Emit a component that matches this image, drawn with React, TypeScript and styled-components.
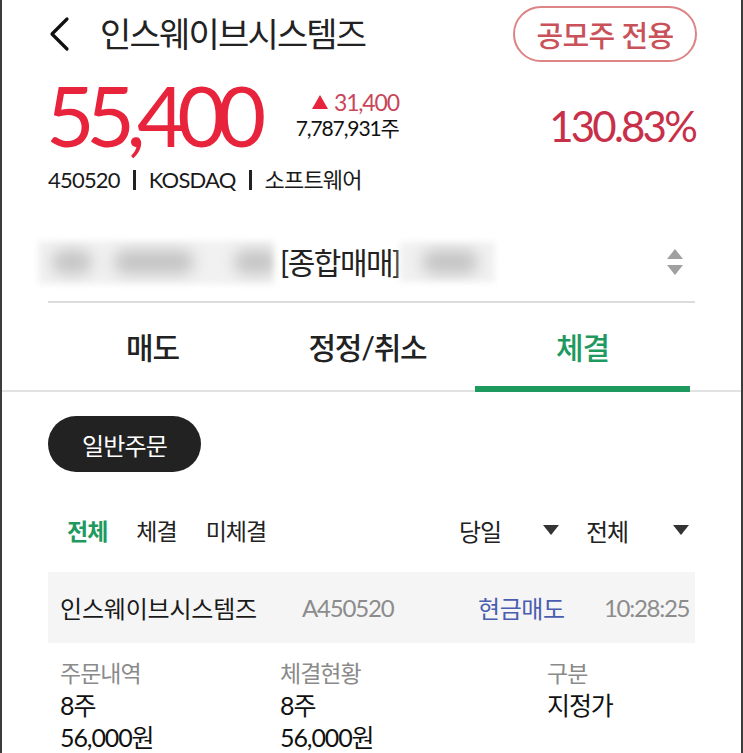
import React from "react";
import styled, { createGlobalStyle } from "styled-components";

const Global = createGlobalStyle`
  html, body { margin: 0; padding: 0; background: #fff; }
  body { font-family: Lato, "Noto Sans CJK KR", sans-serif; color: #1a1a1a; }
  * { box-sizing: border-box; }
`;

const FONT = `Lato, "Noto Sans CJK KR", sans-serif`;

const Page = styled.div`
  width: 743px;
  min-height: 753px;
  border-left: 2px solid #3c3c3c;
  border-right: 2px solid #3c3c3c;
  font-family: ${FONT};
  overflow: hidden;
`;

const Header = styled.div`
  display: flex;
  align-items: center;
  height: 62px;
  padding: 6px 44px 0 44px;
`;

const Back = styled.div`
  width: 24px;
  height: 36px;
  display: flex;
  align-items: center;
  margin-left: 2px;
`;

const Title = styled.h1`
  margin: 0 0 0 28px;
  font-size: 34px;
  font-weight: 400;
  letter-spacing: -1.8px;
  color: #222;
  line-height: 1;
`;

const Badge = styled.div`
  margin-left: auto;
  width: 184px;
  height: 56px;
  border: 2px solid #dc8486;
  border-radius: 28px;
  display: flex;
  align-items: center;
  justify-content: center;
  color: #c9525a;
  font-size: 29px;
  font-weight: 500;
  letter-spacing: -0.6px;
`;

const PriceRow = styled.div`
  display: flex;
  align-items: flex-start;
  height: 82px;
  margin-top: 11px;
  padding: 0 46px 0 44px;
`;

const Price = styled.div`
  font-size: 84px;
  line-height: 84px;
  color: #e8233c;
  letter-spacing: -8.5px;
  font-weight: 400;
`;

const ChangeBox = styled.div`
  margin: 16px 0 0 38px;
  display: flex;
  flex-direction: column;
  align-items: flex-end;
`;

const Change = styled.div`
  display: flex;
  align-items: center;
  font-size: 23px;
  line-height: 26px;
  color: #c8475c;
  letter-spacing: -1.2px;
`;

const Tri = styled.span`
  display: inline-block;
  width: 0;
  height: 0;
  border-left: 8px solid transparent;
  border-right: 8px solid transparent;
  border-bottom: 14px solid #e8233c;
  margin-right: 6px;
`;

const Volume = styled.div`
  font-size: 21px;
  line-height: 26px;
  color: #111;
  letter-spacing: -1.1px;
`;

const Rate = styled.div`
  margin: 32px 0 0 auto;
  font-size: 42px;
  line-height: 42px;
  color: #c8304a;
  letter-spacing: -2.8px;
`;

const Meta = styled.div`
  margin-top: 12px;
  padding: 0 46px;
  font-size: 22px;
  line-height: 26px;
  color: #1a1a1a;
  letter-spacing: -0.8px;
  display: flex;
  align-items: center;
`;

const Sep = styled.span`
  display: inline-block;
  width: 3px;
  height: 20px;
  background: #222;
  margin: 0 13px;
`;

const AccountRow = styled.div`
  margin: 30px 46px 0 46px;
  height: 80px;
  border-bottom: 2px solid #dcdcdc;
  display: flex;
  align-items: center;
`;

const Blur = styled.div<{ $w: number; $h: number }>`
  width: ${(p) => p.$w}px;
  height: ${(p) => p.$h}px;
  background: #f1f1f1;
  overflow: hidden;
  filter: blur(3px);
  display: flex;
  align-items: center;
  flex-shrink: 0;
`;

const Blob = styled.span<{ $w: number; $ml: number }>`
  display: block;
  width: ${(p) => p.$w}px;
  height: 24px;
  margin-left: ${(p) => p.$ml}px;
  background: #c4c4c4;
  border-radius: 12px;
  filter: blur(7px);
  flex-shrink: 0;
`;

const AcctText = styled.span`
  font-size: 30px;
  letter-spacing: -1.5px;
  color: #222;
  margin: 0 0 0 6px;
  line-height: 1;
`;

const Stepper = styled.div`
  margin-left: auto;
  margin-right: 12px;
  display: flex;
  flex-direction: column;
  gap: 6px;
`;

const Tabs = styled.div`
  display: grid;
  grid-template-columns: repeat(3, 215px);
  padding-left: 43px;
  border-bottom: 2px solid #e2e2e2;
`;

const Tab = styled.div<{ $active?: boolean }>`
  height: 89px;
  margin-bottom: -2px;
  padding-top: 2px;
  display: flex;
  align-items: center;
  justify-content: center;
  font-size: 30px;
  font-weight: 500;
  letter-spacing: -1.2px;
  color: ${(p) => (p.$active ? "#1f9a5f" : "#222")};
  border-bottom: 6px solid ${(p) => (p.$active ? "#1f9a5f" : "transparent")};
`;

const Body = styled.div`
  padding: 0 46px;
`;

const Pill = styled.div`
  margin-top: 24px;
  width: 153px;
  height: 56px;
  border-radius: 28px;
  background: #222;
  color: #fff;
  display: flex;
  align-items: center;
  justify-content: center;
  font-size: 24px;
  letter-spacing: -0.8px;
`;

const FilterRow = styled.div`
  margin-top: 40px;
  height: 36px;
  display: flex;
  align-items: center;
  font-size: 23px;
  letter-spacing: -1px;
`;

const Filter = styled.span<{ $active?: boolean }>`
  color: ${(p) => (p.$active ? "#1f9a5f" : "#222")};
  font-weight: ${(p) => (p.$active ? 700 : 400)};
  margin-right: 29px;
  &:first-child { margin-left: 19px; }
`;

const Select = styled.div<{ $w: number }>`
  display: flex;
  align-items: center;
  justify-content: space-between;
  width: ${(p) => p.$w}px;
  color: #222;
  font-size: 24px;
`;

const Down = styled.span`
  width: 0;
  height: 0;
  border-left: 8px solid transparent;
  border-right: 8px solid transparent;
  border-top: 10px solid #333;
`;

const Card = styled.div`
  margin-top: 24px;
  height: 71px;
  background: #f5f5f5;
  display: grid;
  grid-template-columns: 242px 176px 126px auto;
  align-items: center;
  padding-left: 12px;
  font-size: 24px;
`;

const Cell = styled.span<{ $color?: string; $ls?: number }>`
  color: ${(p) => p.$color || "#1a1a1a"};
  letter-spacing: ${(p) => (p.$ls ?? -0.6)}px;
  white-space: nowrap;
`;

const Details = styled.div`
  display: grid;
  grid-template-columns: 220px 267px auto;
  padding: 14px 0 0 12px;
`;

const Col = styled.div`
  display: flex;
  flex-direction: column;
`;

const Label = styled.span`
  font-size: 23px;
  line-height: 32px;
  color: #8a8a8a;
  letter-spacing: -1px;
`;

const Value = styled.span`
  font-size: 25px;
  line-height: 32px;
  color: #111;
  letter-spacing: -1.1px;
`;

export default function App() {
  return (
    <Page>
      <Global />
      <Header>
        <Back>
          <svg width="22" height="36" viewBox="0 0 22 36">
            <path d="M19 3 L4 18 L19 33" fill="none" stroke="#111" strokeWidth="3.2" strokeLinecap="round" strokeLinejoin="round" />
          </svg>
        </Back>
        <Title>인스웨이브시스템즈</Title>
        <Badge>공모주 전용</Badge>
      </Header>
      <PriceRow>
        <Price>55,400</Price>
        <ChangeBox>
          <Change>
            <Tri />
            31,400
          </Change>
          <Volume>7,787,931주</Volume>
        </ChangeBox>
        <Rate>130.83%</Rate>
      </PriceRow>
      <Meta>
        450520<Sep />KOSDAQ<Sep />소프트웨어
      </Meta>
      <AccountRow>
        <Blur $w={236} $h={43} style={{ marginLeft: -10 }}>
          <Blob $w={40} $ml={14} />
          <Blob $w={80} $ml={22} />
          <Blob $w={44} $ml={40} />
        </Blur>
        <AcctText>[종합매매]</AcctText>
        <Blur $w={95} $h={40}>
          <Blob $w={56} $ml={22} />
        </Blur>
        <Stepper>
          <svg width="16" height="10" viewBox="0 0 16 10">
            <path d="M8 0 L16 10 L0 10 Z" fill="#a0a0a0" />
          </svg>
          <svg width="16" height="10" viewBox="0 0 16 10">
            <path d="M0 0 L16 0 L8 10 Z" fill="#a0a0a0" />
          </svg>
        </Stepper>
      </AccountRow>
      <Tabs>
        <Tab>매도</Tab>
        <Tab>정정/취소</Tab>
        <Tab $active>체결</Tab>
      </Tabs>
      <Body>
        <Pill>일반주문</Pill>
        <FilterRow>
          <Filter $active>전체</Filter>
          <Filter>체결</Filter>
          <Filter>미체결</Filter>
          <Select $w={100} style={{ marginLeft: "auto" }}>
            당일
            <Down />
          </Select>
          <Select $w={103} style={{ marginLeft: 27, marginRight: 6 }}>
            전체
            <Down />
          </Select>
        </FilterRow>
        <Card>
          <Cell $ls={-0.2}>인스웨이브시스템즈</Cell>
          <Cell $color="#8c8c8c" $ls={-1.2}>A450520</Cell>
          <Cell $color="#4a5db0" $ls={-0.4}>현금매도</Cell>
          <Cell $color="#8c8c8c" $ls={-1.3}>10:28:25</Cell>
        </Card>
        <Details>
          <Col>
            <Label>주문내역</Label>
            <Value>8주</Value>
            <Value>56,000원</Value>
          </Col>
          <Col>
            <Label>체결현황</Label>
            <Value>8주</Value>
            <Value>56,000원</Value>
          </Col>
          <Col>
            <Label>구분</Label>
            <Value>지정가</Value>
          </Col>
        </Details>
      </Body>
    </Page>
  );
}
